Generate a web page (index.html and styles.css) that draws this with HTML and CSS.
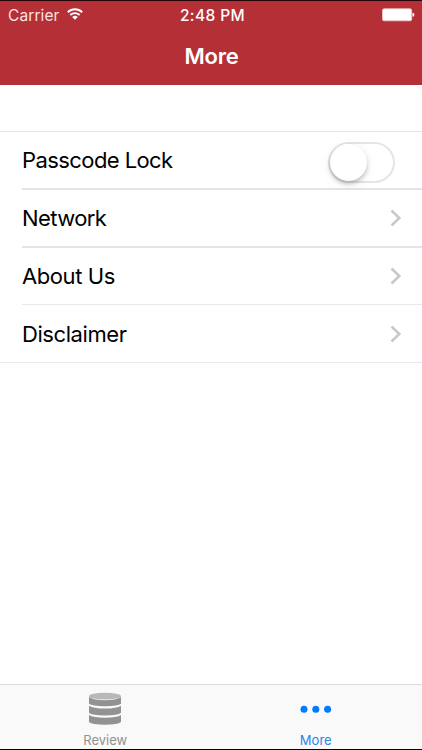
FILE: index.html
```
<!DOCTYPE html>
<html lang="en">
<head>
    <meta charset="UTF-8">
    <meta name="viewport" content="width=device-width, initial-scale=1.0">
    <title>More</title>
    <link rel="stylesheet" href="styles.css">
</head>
<body>
    <header class="header">
        <div class="status-bar">
            <div class="carrier">
                <span class="carrier-name">Carrier</span>
                <svg class="wifi" width="16" height="12" viewBox="0 0 16 12">
                    <path d="M0.8 4.2 A10.4 10.4 0 0 1 15.2 4.2" fill="none" stroke="#fff" stroke-width="1.9"/>
                    <path d="M3.3 7 A6.8 6.8 0 0 1 12.7 7" fill="none" stroke="#fff" stroke-width="1.8"/>
                    <path d="M5.2 9 A4 4 0 0 1 10.8 9 L8 11.8 Z" fill="#fff"/>
                </svg>
            </div>
            <span class="time">2:48 PM</span>
            <div class="battery">
                <svg width="33" height="14" viewBox="0 0 33 14">
                    <rect x="0.5" y="0.8" width="29.2" height="12" rx="1.6" fill="#fff" stroke="#f0c9cb" stroke-width="0.8"/>
                    <path d="M30.5 4.8 Q32.4 5 32.4 6.8 Q32.4 8.6 30.5 8.8 Z" fill="#fff"/>
                </svg>
            </div>
        </div>
        <h1>More</h1>
    </header>
    <main class="content">
        <ul class="menu">
            <li class="thick">
                <span class="passcode">Passcode Lock</span>
                <div class="switch"><div class="knob"></div></div>
            </li>
            <li class="thick">
                <span class="network">Network</span>
                <svg class="arrow" width="12" height="18" viewBox="0 0 12 18"><path d="M1.5 1.5 L9.3 9 L1.5 16.5"/></svg>
            </li>
            <li class="short">
                <span class="about">About Us</span>
                <svg class="arrow" width="12" height="18" viewBox="0 0 12 18"><path d="M1.5 1.5 L9.3 9 L1.5 16.5"/></svg>
            </li>
            <li>
                <span class="disclaimer">Disclaimer</span>
                <svg class="arrow" width="12" height="18" viewBox="0 0 12 18"><path d="M1.5 1.5 L9.3 9 L1.5 16.5"/></svg>
            </li>
        </ul>
    </main>
    <nav class="tabs">
        <div class="tab">
            <svg width="34" height="34" viewBox="0 0 34 34">
                <ellipse cx="17" cy="4.2" rx="16" ry="3.4" fill="#b8b8b8"/>
                <g fill="#929292">
                    <path d="M1 5 Q6 8.2 17 8.2 T33 5 V11.8 Q30 14.2 17 14.2 T1 11.8 Z"/>
                    <path d="M1 13.8 Q5 16.6 17 16.6 T33 13.8 V20.8 Q30 23.4 17 23.4 T1 20.8 Z"/>
                    <path d="M1 23 Q5 25.8 17 25.8 T33 23 V30 Q30 32.8 17 32.8 T1 30 Z"/>
                </g>
            </svg>
            <span>Review</span>
        </div>
        <div class="tab active">
            <svg width="34" height="34" viewBox="0 0 34 34">
                <g fill="#007aff">
                    <circle cx="5" cy="17.3" r="3.5"/>
                    <circle cx="16.8" cy="17.3" r="3.5"/>
                    <circle cx="28.6" cy="17.3" r="3.5"/>
                </g>
            </svg>
            <span>More</span>
        </div>
    </nav>
</body>
</html>
```
FILE: styles.css
```
body {
    font-family: Inter, "Liberation Sans", sans-serif;
    margin: 0;
    height: 750px;
    display: flex;
    flex-direction: column;
    background-color: #fff;
    overflow: hidden;
    box-sizing: border-box;
    border-bottom: 1px solid #000;
}
.header {
    height: 85px;
    box-sizing: border-box;
    border-top: 1px solid #250407;
    background-color: #b42f36;
    color: #fff;
}
.status-bar {
    display: grid;
    grid-template-columns: 1fr auto 1fr;
    align-items: center;
    height: 28px;
    padding: 0 7px 0 8px;
    font-size: 15.5px;
}
.carrier {
    display: flex;
    align-items: center;
    gap: 7px;
    color: #fbe4e4;
}
.carrier-name {
    letter-spacing: 0.1px;
}
.wifi {
    margin-bottom: 3px;
}
.time {
    margin-left: 2px;
    font-size: 15.5px;
    font-weight: 500;
    letter-spacing: 0.4px;
}
.battery {
    display: flex;
    justify-content: flex-end;
}
h1 {
    margin: 14px 0 0 1px;
    font-size: 22px;
    line-height: 26px;
    font-weight: 600;
    letter-spacing: -0.2px;
    text-align: center;
}
.content {
    flex: 1;
    padding-top: 46px;
}
.menu {
    list-style: none;
    margin: 0;
    padding: 0;
    border-top: 1px solid #e6e6e8;
    border-bottom: 1px solid #e9e9eb;
}
.menu li {
    display: flex;
    align-items: center;
    justify-content: space-between;
    height: 58px;
    box-sizing: border-box;
    margin-left: 22px;
    padding-right: 20px;
    border-bottom: 1px solid #e9e9eb;
    font-size: 22px;
    color: #000;
}
.menu .thick {
    border-bottom: 2px solid #e4e4e6;
}
.menu .short {
    height: 57px;
}
.menu li:last-child {
    height: 57px;
    border-bottom: none;
}
.passcode, .network {
    letter-spacing: -0.58px;
}
.about, .disclaimer {
    letter-spacing: -0.42px;
}
.switch {
    width: 67px;
    height: 41px;
    box-sizing: border-box;
    margin: 4px 7px 0 0;
    border: 2px solid #e5e5e5;
    border-radius: 21px;
}
.knob {
    width: 37px;
    height: 37px;
    border-radius: 50%;
    background-color: #fff;
    box-shadow: 0 3px 4px rgba(0, 0, 0, 0.2), 0 3px 12px rgba(0, 0, 0, 0.08);
}
.arrow path {
    fill: none;
    stroke: #c7c7cc;
    stroke-width: 2.5;
}
.tabs {
    display: flex;
    height: 65px;
    box-sizing: border-box;
    padding-right: 1px;
    border-top: 1px solid #d9d9d9;
    background-color: #f9f9f9;
}
.tab {
    flex: 1;
    display: flex;
    flex-direction: column;
    align-items: center;
    padding-top: 7px;
    font-size: 13px;
    color: #929292;
}
.tab span {
    margin-top: 6px;
    line-height: 16px;
}
.active {
    color: #2b83ea;
}
```
